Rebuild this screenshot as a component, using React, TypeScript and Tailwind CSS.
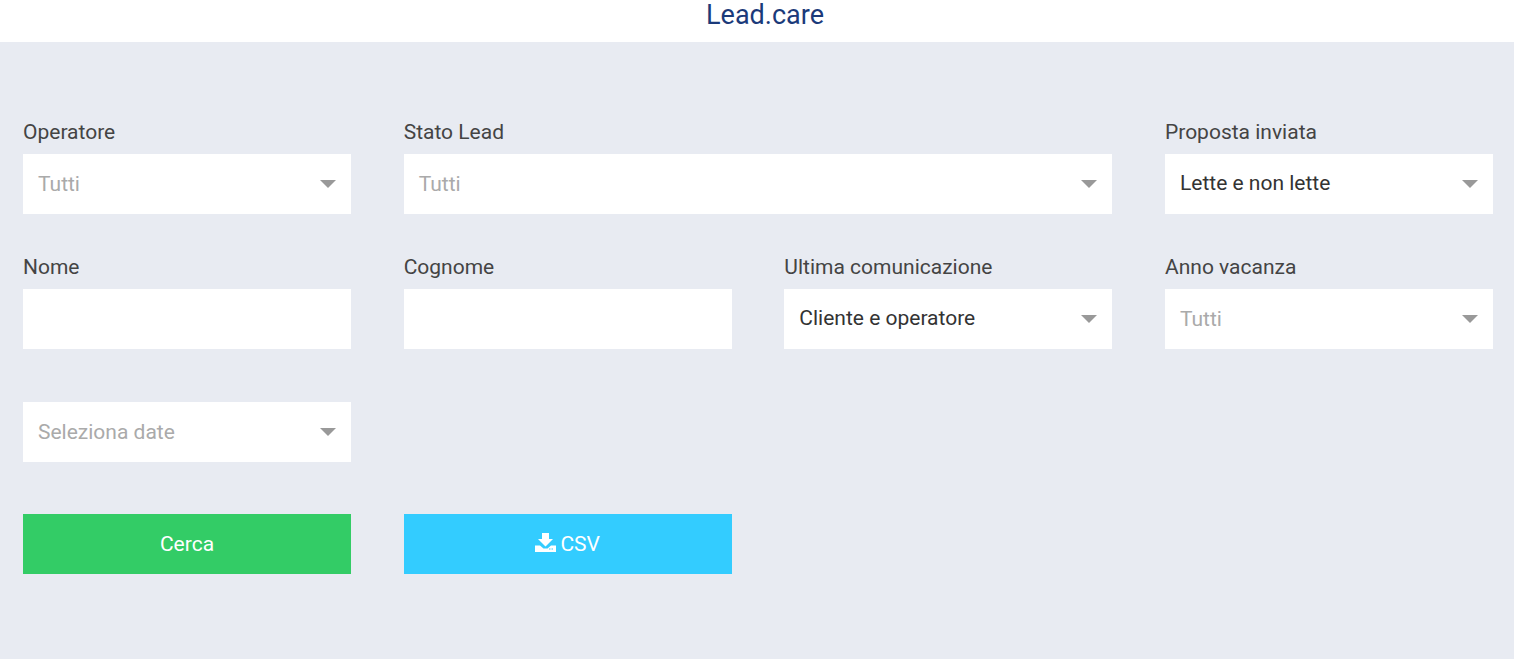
import React from "react";

const Label = ({ children }: { children: React.ReactNode }) => (
  <label className="block h-[24px] mb-[10px] text-[21px] leading-[24px] text-[#444444]">{children}</label>
);

const Select = ({ value, placeholder }: { value: string; placeholder?: boolean }) => (
  <div className="flex h-[60px] items-center justify-between bg-white pl-[15px] pr-[15px]">
    <span className={placeholder ? "text-[21px] leading-[28px] text-[#aaaaaa]" : "mb-[2px] text-[21px] leading-[26px] text-[#333333]"}>{value}</span>
    <span className="h-0 w-0 border-x-[8px] border-t-[8px] border-x-transparent border-t-[#999999]" />
  </div>
);

const Input = () => <input className="block h-[60px] w-full bg-white px-[15px] text-[21px] outline-none" />;

const App = () => {
  return (
    <div className="min-h-[659px] bg-[#e8ebf2] font-['Roboto',sans-serif]">
      <header className="flex h-[42px] justify-center bg-white pl-[16px]">
        <h1 className="text-[27px] leading-[30px] text-[#1b3a7a]">Lead.care</h1>
      </header>

      <main className="grid grid-cols-4 gap-x-[52.67px] pl-[23px] pr-[21px] pt-[78px]">
        <div>
          <Label>Operatore</Label>
          <Select value="Tutti" placeholder />
        </div>
        <div className="col-span-2">
          <Label>Stato Lead</Label>
          <Select value="Tutti" placeholder />
        </div>
        <div>
          <Label>Proposta inviata</Label>
          <Select value="Lette e non lette" />
        </div>

        <div className="mt-[41px]">
          <Label>Nome</Label>
          <Input />
        </div>
        <div className="mt-[41px]">
          <Label>Cognome</Label>
          <Input />
        </div>
        <div className="mt-[41px]">
          <Label>Ultima comunicazione</Label>
          <Select value="Cliente e operatore" />
        </div>
        <div className="mt-[41px]">
          <Label>Anno vacanza</Label>
          <Select value="Tutti" placeholder />
        </div>

        <div className="col-start-1 mt-[53px]">
          <Select value="Seleziona date" placeholder />
        </div>

        <button className="col-start-1 mt-[52px] h-[60px] bg-[#33cc66] pt-[2px] text-[21px] text-white">Cerca</button>
        <button className="mt-[52px] flex h-[60px] items-center justify-center gap-[4px] bg-[#33ccff] pt-[2px] text-[21px] text-white">
          <svg width="21" height="19" viewBox="0 0 21 19" fill="white" className="mb-[5px]">
            <path d="M7 0h7v6h4l-7.5 7.5L3 6h4z" />
            <path fillRule="evenodd" d="M0 12.5h5l3.5 3h4l3.5-3h5V19H0zM14 15.5h1.5v1H14zM16.5 15.5H18v1h-1.5z" />
          </svg>
          CSV
        </button>
      </main>
    </div>
  );
};

export default App;
